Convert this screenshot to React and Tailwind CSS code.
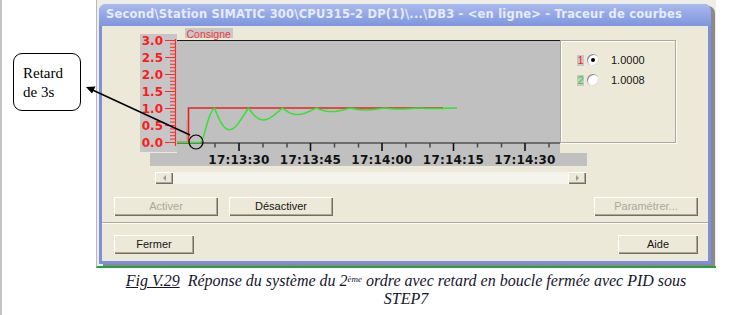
import React from "react";

const BTN_SHADOW =
  "shadow-[inset_1px_1px_0_#ffffff,inset_-1px_-1px_0_#716f64,inset_-2px_-2px_0_#aca899]";

function XPButton({ children, disabled, className }) {
  return (
    <div
      className={`h-[19px] flex items-center justify-center bg-[#ece9d8] ${BTN_SHADOW} text-[11px] font-['Liberation_Sans',Arial,sans-serif] ${
        disabled ? "text-[#aca899]" : "text-[#151515]"
      } ${className}`}
    >
      {children}
    </div>
  );
}

function Radio({ checked }) {
  return (
    <div className="w-[12px] h-[12px] rounded-full bg-white shadow-[inset_1px_1px_0_#8a8a8a,inset_-1px_-1px_0_#e0ded4] flex items-center justify-center">
      {checked && <div className="w-[4px] h-[4px] rounded-full bg-black" />}
    </div>
  );
}

function Chart() {
  const yTicks = [];
  for (let i = 0; i <= 30; i++) {
    const y = 142.5 - i * 3.4;
    const major = i % 5 === 0;
    yTicks.push(
      <line key={i} x1={major ? 165 : 170} x2={176} y1={y} y2={y} stroke="#ff2a2a" strokeWidth="1" />
    );
  }
  const yLabels = ["0.0", "0.5", "1.0", "1.5", "2.0", "2.5", "3.0"];
  const majors = [239, 310.5, 382, 453.5, 525];
  const minors = [215, 263, 287, 334.5, 358.5, 406, 430, 477.5, 501.5, 549];
  const times = ["17:13:30", "17:13:45", "17:14:00", "17:14:15", "17:14:30"];

  const pts = [];
  for (let x = 214.5; x <= 457; x += 0.5) {
    const T = 34;
    const phase = ((x - 214.5) / T) * Math.PI;
    const A = 0.6 * Math.pow(0.55, (x - 233) / T);
    const v = 1 - A * Math.abs(Math.sin(phase));
    pts.push(`${x.toFixed(1)},${(142.5 - 34.5 * v).toFixed(2)}`);
  }
  const green = `M177,142.5 L200,142.5 C205,141.5 206.5,114 214.5,108 L${pts.join(" L")}`;

  return (
    <svg width="420" height="139" viewBox="140 27 420 139" className="block overflow-visible shrink-0">
      <rect x="140" y="34" width="37" height="118" fill="#c6c6c6" />
      <rect x="177" y="40" width="383" height="126" fill="#c0c0c0" />
      <rect x="150" y="153" width="437" height="13" fill="#c0c0c0" />
      <rect x="185" y="28" width="48" height="10" fill="#c8c8c8" />
      <text x="186.5" y="33.5" fontFamily="Liberation Sans, Arial, sans-serif" fontSize="10.5" fill="#f03a3a" dominantBaseline="central">
        Consigne
      </text>
      <line x1="175.5" x2="175.5" y1="39" y2="146" stroke="#ff2a2a" strokeWidth="1.2" />
      {yTicks}
      {yLabels.map((l, i) => (
        <text
          key={l}
          x="163"
          y={142.5 - i * 17}
          textAnchor="end"
          dominantBaseline="central"
          fontFamily="DejaVu Sans, sans-serif"
          fontWeight="bold"
          fontSize="12"
          fill="#ff1a1a"
        >
          {l}
        </text>
      ))}
      <line x1="177" x2="560" y1="40.5" y2="40.5" stroke="#1a1a1a" strokeWidth="1.2" />
      <line x1="177" x2="560" y1="143" y2="143" stroke="#1a1a1a" strokeWidth="1.2" />
      {minors.map((x) => (
        <line key={x} x1={x} x2={x} y1="143" y2="147.5" stroke="#4a4a4a" strokeWidth="1.5" />
      ))}
      {majors.map((x) => (
        <line key={x} x1={x} x2={x} y1="143" y2="151" stroke="#111" strokeWidth="1.6" />
      ))}
      {times.map((t, i) => (
        <text
          key={t}
          x={majors[i]}
          y="160"
          textAnchor="middle"
          dominantBaseline="central"
          fontFamily="DejaVu Sans, sans-serif"
          fontWeight="bold"
          fontSize="12"
          letterSpacing="0.2"
          fill="#111"
        >
          {t}
        </text>
      ))}
      <path d="M177,142.5 L188.5,142.5 L188.5,108 L443,108" fill="none" stroke="#e82222" strokeWidth="1.6" />
      <line x1="187" x2="187" y1="120" y2="142" stroke="#f08080" strokeWidth="1" />
      <path d={green} fill="none" stroke="#33e033" strokeWidth="1.5" strokeLinejoin="round" />
    </svg>
  );
}

export default function App() {
  return (
    <div className="relative w-[749px] h-[315px] bg-white flex overflow-hidden">
      <div className="w-[2px] h-full bg-[#c4c4c4] shrink-0" />
      <div className="ml-[94px] w-[620px] flex flex-col shrink-0">
        <div className="bg-[#efeee6] border-l border-[#b8b8b8] pt-[4px] pl-[2px] pb-[2px] border-b-2 border-b-[#25a248]">
          <div className="w-[612px] h-[260px] flex flex-col rounded-t-[7px] bg-[#7b8fdb] shadow-[4px_2px_0_#8a8a8a]">
            <div className="h-[22px] shrink-0 rounded-t-[7px] bg-linear-to-b from-[#a9baee] to-[#7f95de] flex items-center pl-[7px] text-[#e6ecfa] font-bold text-[11.5px] tracking-[0.2px] font-['DejaVu_Sans',Verdana,sans-serif] whitespace-nowrap overflow-hidden">
              {"Second\\Station SIMATIC 300\\CPU315-2 DP(1)\\...\\DB3 - <en ligne> - Traceur de courbes"}
            </div>
            <div className="mx-[3px] mb-[3px] flex-1 bg-[#ece9d8] flex flex-col">
              <div className="mt-[1px] ml-[38px] flex items-start">
                <Chart />
                <div className="mt-[13px] w-[116px] h-[103px] border border-[#aca899] shadow-[inset_1px_1px_0_#ffffff,1px_1px_0_#ffffff] flex flex-col pl-[16px] pt-[13px] gap-[8px] font-['Liberation_Sans',Arial,sans-serif] text-[11px] text-[#151515]">
                  <div className="h-[12px] flex items-center">
                    <div className="w-[7px] h-[11px] bg-[#c8c8c8] text-[#ff2020] leading-[11px] text-[11px] flex items-center justify-center">1</div>
                    <div className="ml-[3px]">
                      <Radio checked />
                    </div>
                    <span className="ml-[12px] leading-[12px]">1.0000</span>
                  </div>
                  <div className="h-[12px] flex items-center">
                    <div className="w-[7px] h-[11px] bg-[#c8c8c8] text-[#22dd22] leading-[11px] text-[11px] flex items-center justify-center">2</div>
                    <div className="ml-[3px]">
                      <Radio />
                    </div>
                    <span className="ml-[12px] leading-[12px]">1.0008</span>
                  </div>
                </div>
              </div>
              <div className="mt-[6px] ml-[53px] w-[431px] h-[12px] flex bg-[#f4f3ec]">
                <div className={`w-[18px] h-full bg-[#ece9d8] ${BTN_SHADOW} flex items-center justify-center`}>
                  <div className="w-0 h-0 border-y-[3px] border-y-transparent border-r-[3px] border-r-[#9a9a9a]" />
                </div>
                <div className="flex-1" />
                <div className={`w-[18px] h-full bg-[#ece9d8] ${BTN_SHADOW} flex items-center justify-center`}>
                  <div className="w-0 h-0 border-y-[3px] border-y-transparent border-l-[3px] border-l-[#9a9a9a]" />
                </div>
              </div>
              <div className="mt-[13px] flex pl-[12px] pr-[10px]">
                <XPButton disabled className="w-[104px]">Activer</XPButton>
                <XPButton className="w-[104px] ml-[11px]">Désactiver</XPButton>
                <XPButton disabled className="w-[104px] ml-auto">Paramétrer...</XPButton>
              </div>
              <div className="mt-[6px] h-[2px] border-t border-[#aca899] border-b border-b-white" />
              <div className="mt-[11px] flex pl-[12px] pr-[10px]">
                <XPButton className="w-[80px]">Fermer</XPButton>
                <XPButton className="w-[80px] ml-auto">Aide</XPButton>
              </div>
            </div>
          </div>
        </div>
        <div className="pt-[4px] text-center leading-[18px] text-[16px] italic text-[#15152e] font-['Liberation_Serif','Times_New_Roman',serif]">
          <span className="underline">Fig V.29</span>
          {"\u00a0 Réponse du système du 2"}
          <sup className="text-[9px]">ème</sup>
          {" ordre avec retard en boucle fermée avec PID sous"}
          <br />
          STEP7
        </div>
      </div>

      <div className="absolute left-[13px] top-[53px] w-[68px] h-[58px] border border-black rounded-[9px] bg-white pl-[9px] pt-[10px] leading-[19px] text-[15px] text-black font-['Liberation_Serif','Times_New_Roman',serif]">
        Retard
        <br />
        de 3s
      </div>
      <svg className="absolute left-0 top-0 pointer-events-none" width="749" height="315" viewBox="0 0 749 315">
        <line x1="190" y1="135" x2="92" y2="89.8" stroke="#000" strokeWidth="1.5" />
        <polygon points="86,87 95.5,86.5 92,93.5" fill="#000" />
        <circle cx="196" cy="142" r="7" fill="none" stroke="#000" strokeWidth="1.2" />
      </svg>
    </div>
  );
}
